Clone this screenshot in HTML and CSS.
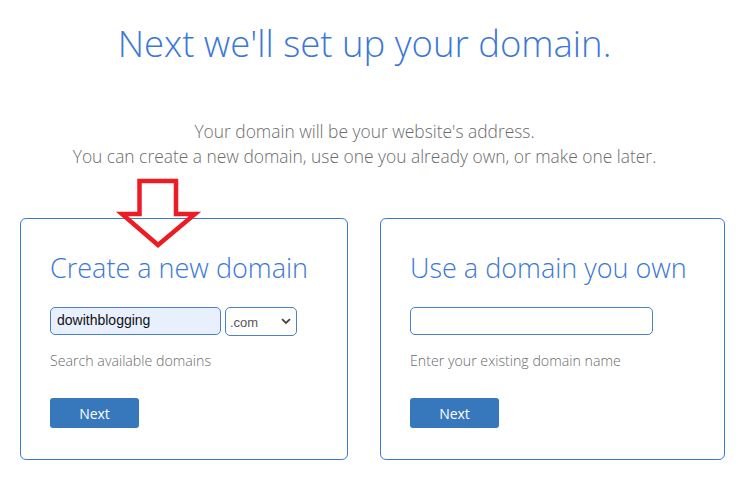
FILE: index.html
```html
<!DOCTYPE html>
<html>

<head>
  <title>Domain setup</title>
  <meta name="viewport" content="width=device-width, initial-scale=1">
  <link rel="stylesheet" href="styles.css">
</head>

<body>
  <div id="page">
    <h1 class="title">Next we'll set up your domain.</h1>
    <p class="intro">
      Your domain will be your website's address.<br>
      You can create a new domain, use one you already own, or make one later.
    </p>

    <div class="cards">
      <!-- Novo dominio -->
      <div class="card card-new">
        <h2 class="card-title">Create a new domain</h2>
        <div class="field-row">
          <input type="text" class="domain-input filled" value="dowithblogging">
          <div class="select-wrap">
            <select class="tld-select">
              <option>.com</option>
              <option>.net</option>
              <option>.org</option>
            </select>
            <svg class="chevron" width="10" height="7" viewBox="0 0 10 7">
              <path d="M1 1.2 L5 5 L9 1.2" fill="none" stroke="#444" stroke-width="1.8" />
            </svg>
          </div>
        </div>
        <p class="hint">Search available domains</p>
        <button type="button" class="next-btn">Next</button>
      </div>

      <!-- Dominio existente -->
      <div class="card card-own">
        <h2 class="card-title">Use a domain you own</h2>
        <div class="field-row">
          <input type="text" class="domain-input wide">
        </div>
        <p class="hint">Enter your existing domain name</p>
        <button type="button" class="next-btn">Next</button>
      </div>
    </div>

    <!-- seta vermelha (anotacao) -->
    <svg class="arrow" width="100" height="80" viewBox="0 0 100 80">
      <polygon points="29.5,6 66,6 66,39 85,39 48,70 12,39 29.5,39" fill="none" stroke="#ed1c24" stroke-width="4.5" stroke-linejoin="miter" />
    </svg>
  </div>
</body>

</html>
```

FILE: styles.css
```css
body {
  margin: 0;
  padding: 0;
  background: #ffffff;
  font-family: "Open Sans", "Liberation Sans", sans-serif;
}

#page {
  position: relative;
  width: 740px;
  height: 482px;
  overflow: hidden;
}

.title {
  margin: 0;
  padding: 18px 11px 0 0;
  text-align: center;
  font-size: 36.5px;
  font-weight: 300;
  line-height: 50px;
  color: #3b78d8;
}

.intro {
  margin: 51px 0 0;
  padding-right: 11px;
  text-align: center;
  font-size: 17.4px;
  font-weight: 300;
  line-height: 25px;
  color: #6b6b6b;
}

.cards {
  display: grid;
  grid-template-columns: 328px 345px;
  column-gap: 32px;
  margin: 49px 0 0 20px;
}

.card {
  height: 242px;
  box-sizing: border-box;
  border: 1px solid #3b78d8;
  border-radius: 6px;
  padding: 29px 29px 0;
}

.card-title {
  margin: 0 0 19px;
  font-size: 27px;
  font-weight: 300;
  line-height: 40px;
  color: #3b78d8;
}

.field-row {
  display: flex;
  gap: 4px;
  height: 29px;
}

.domain-input {
  box-sizing: border-box;
  width: 171px;
  height: 28px;
  padding: 0 6px;
  border: 1px solid #4a7fc9;
  border-radius: 5px;
  font-family: "Liberation Sans", Arial, sans-serif;
  font-size: 14px;
  color: #111111;
  outline: none;
}

.domain-input.filled {
  background: #e8f0fe;
  padding-bottom: 3px;
}

.domain-input.wide {
  width: 243px;
}

.select-wrap {
  position: relative;
}

.tld-select {
  appearance: none;
  -webkit-appearance: none;
  box-sizing: border-box;
  width: 72px;
  height: 29px;
  padding: 2px 0 0 4px;
  border: 1px solid #4a7fc9;
  border-radius: 5px;
  background: #ffffff;
  font-family: "Liberation Sans", Arial, sans-serif;
  font-size: 13px;
  color: #555555;
  outline: none;
}

.chevron {
  position: absolute;
  right: 6px;
  top: 11px;
  pointer-events: none;
}

.hint {
  margin: 13px 0 0;
  font-size: 14.2px;
  font-weight: 300;
  line-height: 24px;
  color: #6b6b6b;
}

.next-btn {
  display: block;
  margin-top: 25px;
  width: 89px;
  height: 30px;
  border: none;
  border-radius: 3px;
  background-color: #3777bb;
  color: #ffffff;
  font-family: "Open Sans", sans-serif;
  font-size: 14px;
  cursor: pointer;
}

.arrow {
  position: absolute;
  left: 110px;
  top: 175px;
}
```
